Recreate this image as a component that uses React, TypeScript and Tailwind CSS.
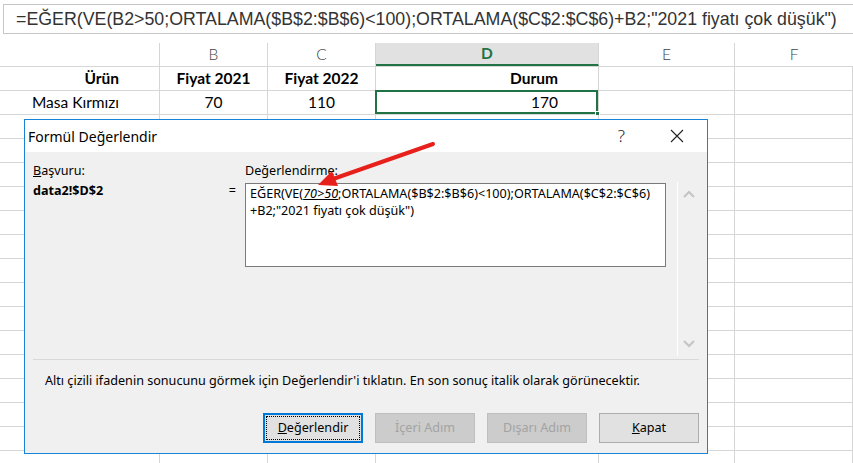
import React from "react";

const cols = [160, 108, 108, 223, 136];
const cellFont = { fontFamily: "Lato, 'Noto Sans', sans-serif" };
const uiFont = { fontFamily: "'Noto Sans', 'Open Sans', sans-serif" };

const rows: string[][] = [
  ["Ürün", "Fiyat 2021", "Fiyat 2022", "Durum", "", ""],
  ["Masa Kırmızı", "70", "110", "170", "", ""],
];

const Row = ({ cells, idx }: { cells: string[]; idx: number }) => (
  <div className="flex h-[24px] border-b border-[#d6d6d6]">
    {[0, 1, 2, 3, 4, 5].map((c) => {
      const text = cells[c] ?? "";
      const align =
        c === 0 || c === 3 ? "justify-end pr-[40px]" : "justify-center";
      const bold = idx === 0 ? "font-bold" : "";
      return (
        <div
          key={c}
          className={`relative flex items-center shrink-0 border-r border-[#d6d6d6] text-[15.5px] text-black ${align} ${bold} ${
            c === 5 ? "flex-1" : ""
          }`}
          style={c < 5 ? { width: cols[c] } : undefined}
        >
          {text}
          {idx === 1 && c === 3 && (
            <div className="absolute -left-[1px] -top-[1px] right-0 bottom-0 border-2 border-[#217346]">
              <div className="absolute -right-[4px] -bottom-[4px] w-[5px] h-[5px] bg-[#217346] border border-white" />
            </div>
          )}
        </div>
      );
    })}
  </div>
);

const Btn = ({
  children,
  variant,
}: {
  children: React.ReactNode;
  variant: "focus" | "disabled" | "normal";
}) => {
  if (variant === "focus")
    return (
      <div className="w-[100px] h-[30px] border-2 border-[#0078d7] bg-[#e1e1e1] p-[1px]">
        <div className="w-full h-full border border-dotted border-black flex items-center justify-center text-[12.6px] text-black">
          {children}
        </div>
      </div>
    );
  if (variant === "disabled")
    return (
      <div className="w-[100px] h-[30px] border border-[#bfbfbf] bg-[#cccccc] flex items-center justify-center text-[12.6px] text-[#a3a3a3]">
        {children}
      </div>
    );
  return (
    <div className="w-[100px] h-[30px] border border-[#adadad] bg-[#e1e1e1] flex items-center justify-center text-[12.6px] text-black">
      {children}
    </div>
  );
};

export default function App() {
  return (
    <div className="relative w-[853px] h-[463px] overflow-hidden bg-white">
      {/* formula bar */}
      <div className="pt-[4px] pl-[3px]">
        <div
          className="h-[30px] w-[900px] border-t border-l border-b border-[#c6c6c6] flex items-center pl-[12px] text-[17.8px] text-[#333] whitespace-nowrap"
          style={{ fontFamily: "'Liberation Sans', Arial, sans-serif" }}
        >
          =EĞER(VE(B2&gt;50;ORTALAMA($B$2:$B$6)&lt;100);ORTALAMA($C$2:$C$6)+B2;"2021 fiyatı çok düşük")
        </div>
      </div>

      {/* sheet */}
      <div className="mt-[9px]" style={cellFont}>
        <div className="flex h-[24px] border-b border-[#d6d6d6] text-[15.5px] text-[#444]">
          <div className="w-[160px] shrink-0 border-r border-[#d6d6d6]" />
          <div className="w-[108px] shrink-0 border-r border-[#d6d6d6] flex items-center justify-center font-light">B</div>
          <div className="w-[108px] shrink-0 border-r border-[#d6d6d6] flex items-center justify-center font-light">C</div>
          <div className="w-[223px] shrink-0 border-r border-[#d6d6d6] bg-[#e1e1e1] border-b-2 border-b-[#217346] flex items-center justify-center font-bold text-[#217346]">D</div>
          <div className="w-[136px] shrink-0 border-r border-[#d6d6d6] flex items-center justify-center font-light">E</div>
          <div className="flex-1 flex items-center justify-center font-light">F</div>
        </div>
        {Array.from({ length: 17 }).map((_, i) => (
          <Row key={i} idx={i} cells={rows[i] ?? []} />
        ))}
      </div>

      {/* dialog */}
      <div
        className="absolute left-[24px] top-[119px] w-[684px] h-[335px] border border-[#1883d7] bg-[#f0f0f0] flex flex-col"
        style={uiFont}
      >
        <div className="h-[32px] bg-white flex items-center pl-[3px] shrink-0">
          <span className="text-[14px] text-black">Formül Değerlendir</span>
          <span className="ml-auto text-[17px] text-[#222] font-light mr-[45px]">?</span>
          <svg width="14" height="14" viewBox="0 0 14 14" className="mr-[23px]">
            <path d="M1 1 L13 13 M13 1 L1 13" stroke="#222" strokeWidth="1.1" fill="none" />
          </svg>
        </div>

        <div className="flex pl-[8px] pt-[11px] text-[12.6px] text-black">
          <div className="w-[212px] shrink-0 flex flex-col">
            <div className="h-[16px] leading-[16px]">
              <span className="underline">B</span>aşvuru:
            </div>
            <div className="mt-[4px] h-[16px] leading-[16px] flex">
              <span className="font-bold">data2!$D$2</span>
              <span className="ml-auto mr-[9px]">=</span>
            </div>
          </div>
          <div className="w-[421px] shrink-0 flex flex-col">
            <div className="h-[16px] leading-[16px]">
              De<span className="underline">ğ</span>erlendirme:
            </div>
            <div className="mt-[4px] h-[84px] bg-white border border-[#7a7a7a] px-[4px] pt-[1px] leading-[17px] whitespace-nowrap">
              EĞER(VE(<span className="italic underline">70&gt;50</span>;ORTALAMA($B$2:$B$6)&lt;100);ORTALAMA($C$2:$C$6)
              <br />
              +B2;"2021 fiyatı çok düşük")
            </div>
          </div>
          <div className="ml-[11px] w-[22px] h-[174px] mt-[19px] border-l border-white flex flex-col items-center justify-between py-[8px]">
            <svg width="12" height="8" viewBox="0 0 12 8">
              <path d="M1 7 L6 2 L11 7" stroke="#c4c4c4" strokeWidth="2" fill="none" />
            </svg>
            <svg width="12" height="8" viewBox="0 0 12 8">
              <path d="M1 1 L6 6 L11 1" stroke="#c4c4c4" strokeWidth="2" fill="none" />
            </svg>
          </div>
        </div>

        <div className="mx-[8px] mt-[3px] w-[666px] border-t border-[#d9d9d9]" />

        <div className="pl-[20px] mt-[12px] h-[18px] leading-[18px] text-[12.6px] text-black whitespace-nowrap">
          Altı çizili ifadenin sonucunu görmek için Değerlendir'i tıklatın. En son sonuç italik olarak görünecektir.
        </div>

        <div className="flex gap-[12px] pl-[238px] mt-[23px]">
          <Btn variant="focus">
            <span className="underline">D</span>eğerlendir
          </Btn>
          <Btn variant="disabled">İçeri Adım</Btn>
          <Btn variant="disabled">Dışarı Adım</Btn>
          <Btn variant="normal">
            <span className="underline">K</span>apat
          </Btn>
        </div>
      </div>

      {/* red arrow annotation */}
      <svg className="absolute left-0 top-0 pointer-events-none" width="853" height="463">
        <line x1="433" y1="144" x2="333" y2="179" stroke="#e8201c" strokeWidth="4" strokeLinecap="round" />
        <polygon points="318,185 338,186 332,171" fill="#e8201c" />
      </svg>
    </div>
  );
}
